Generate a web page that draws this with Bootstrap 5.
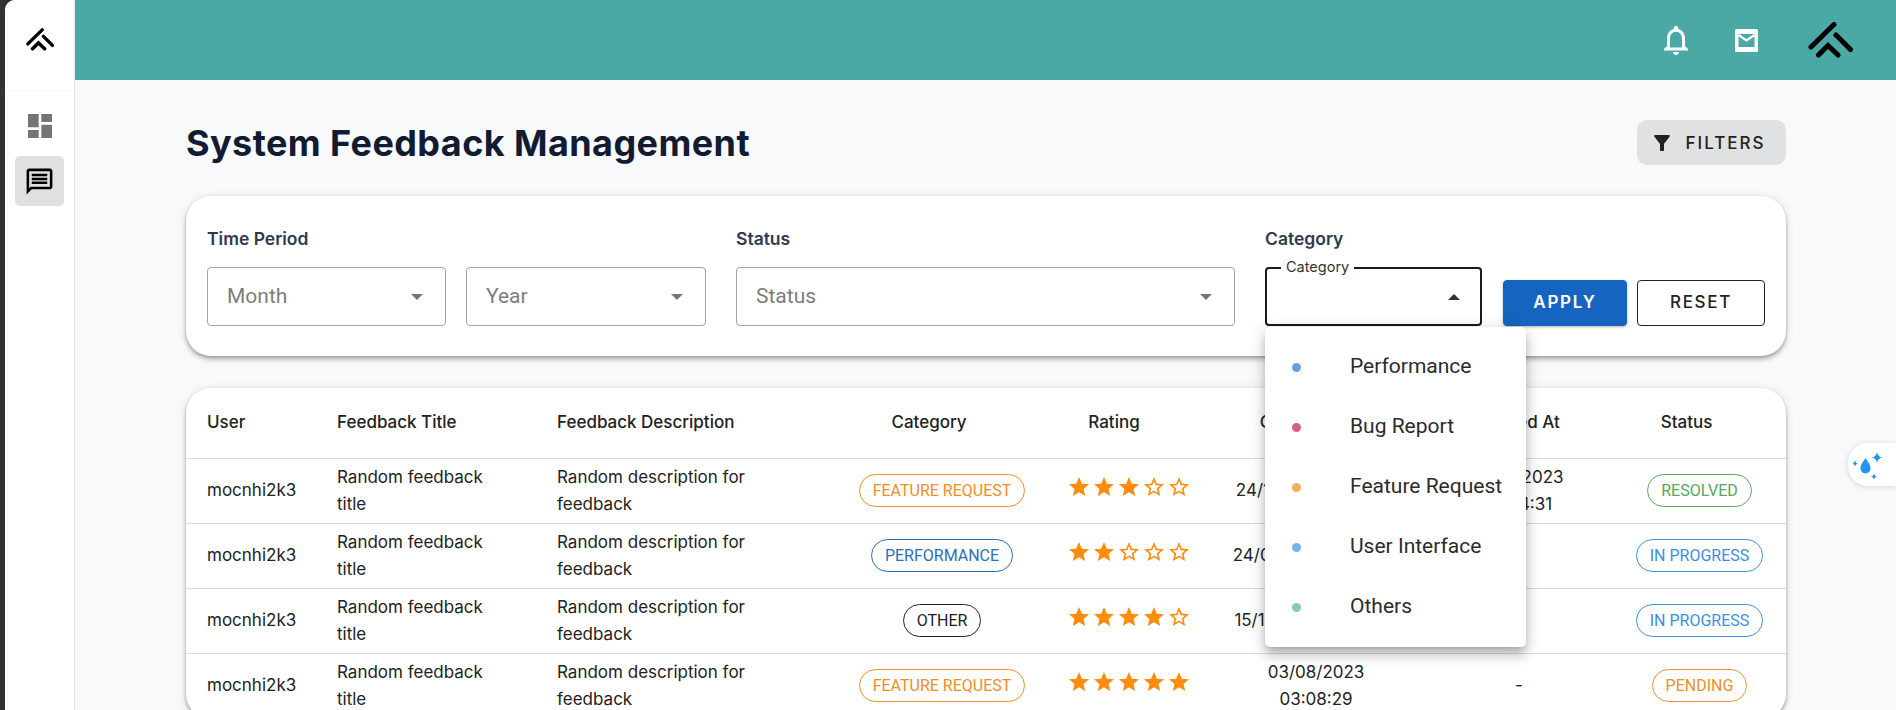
<!DOCTYPE html>
<html lang="en">
<head>
    <meta charset="UTF-8">
    <meta name="viewport" content="width=device-width, initial-scale=1.0">
    <title>System Feedback Management</title>
    <link href="https://cdn.jsdelivr.net/npm/bootstrap@5.3.3/dist/css/bootstrap.min.css" rel="stylesheet">
    <style>
        html, body { height: 710px; overflow: hidden; }
        body { background: #333; padding-left: 5px; font-family: "Inter", "Liberation Sans", sans-serif; color: #212b36; }
        .app-shell { height: 710px; background: #f8f9fb; border-top-left-radius: 10px; overflow: hidden; }
        .side-rail { width: 70px; background: #fff; border-right: 1px solid #e6e7e9; flex: none; }
        .side-logo { height: 91px; border-bottom: 1px solid #f8f8f8; padding-bottom: 12px; }
        .side-tile { width: 49px; height: 50px; border-radius: 5px; }
        .side-tile.active-tile { background: #e0e0e0; margin-top: 5px; }
        .side-nav { padding-top: 10px; }
        .top-bar { height: 80px; background: #4aa8a5; padding-right: 43px; }
        .mail-ico { margin: 0 50px 0 41px; }
        .page-body { padding: 40px 110px 0 111px; }
        .title-row { height: 45px; }
        .page-title { font-size: 36px; font-weight: 700; color: #121b31; margin: 1px 0 -1px; line-height: 45px; letter-spacing: .42px; }
        .filter-toggle { width: 149px; height: 45px; background: #e0e1e2; border: 0; border-radius: 10px; font-family: "Inter", sans-serif; font-size: 17px; font-weight: 500; letter-spacing: 2px; color: #212121; gap: 11px; padding: 2px 7px 0 0; }
        .filter-toggle svg { margin-top: -2px; }
        .panel-box { background: #fff; border: 0; border-radius: 25px; box-shadow: 0 2px 4px -1px rgba(0,0,0,.3), 0 4px 5px rgba(0,0,0,.14), 0 1px 10px rgba(0,0,0,.1); }
        .filter-panel { margin-top: 31px; height: 160px; padding: 31px 21px 30px; }
        .field-label { font-family: "Inter", sans-serif; font-size: 17.5px; font-weight: 600; color: #2f3a4c; line-height: 24px; margin-bottom: 16px; }
        .select-box { height: 59px; border: 1px solid #a3a3a3; border-radius: 4px; padding: 0 22px 0 19px; font-family: "Roboto", sans-serif; font-size: 21px; color: #7d7d7d; background: #fff; }
        .select-caret { width: 0; height: 0; border-left: 6.5px solid transparent; border-right: 6.5px solid transparent; border-top: 6.5px solid #757575; }
        .time-fields { gap: 20px; }
        .month-box { width: 239px; }
        .year-box { width: 240px; }
        .status-group { margin-left: 30px; width: 499px; }
        .category-group { margin-left: 30px; }
        .action-group { margin-left: 21px; gap: 10px; }
        .select-box.open-box { border: 2px solid #1a1a1a; position: relative; width: 217px; padding-right: 20px; }
        .open-box .select-caret { border-top: 0; border-bottom: 6.5px solid #333; }
        .notch-label { position: absolute; top: -10px; left: 14px; background: #fff; padding: 0 5px; font-family: "Inter", sans-serif; font-size: 14.5px; line-height: 16px; color: #333; }
        .act-btn { height: 46px; font-family: "Inter", sans-serif; font-size: 17px; font-weight: 600; letter-spacing: 1.7px; border-radius: 4px; padding: 0; }
        .apply-btn { width: 124px; background: #1565c0; border-color: #1565c0; box-shadow: 0 1px 3px rgba(0,0,0,.3); }
        .reset-btn { width: 128px; background: #fff; border: 1px solid #222; color: #222; font-weight: 500; }
        .category-menu { top: 58px; left: -2px; width: 261px; padding: 10px 0; border: 0; border-radius: 5px; box-shadow: 0 5px 6px -3px rgba(0,0,0,.2), 0 9px 12px 1px rgba(0,0,0,.14), 0 3px 16px 2px rgba(0,0,0,.12); margin: 0; }
        .category-menu .dropdown-item { height: 60px; padding: 0 0 0 27px; font-size: 21px; color: #2b2b2b; gap: 49px; }
        .cat-dot { width: 9px; height: 9px; border-radius: 50%; flex: none; }
        .table-panel { margin-top: 32px; overflow: hidden; border-radius: 25px; }
        .feedback-table { table-layout: fixed; width: 1600px; margin: 0; font-size: 17px; line-height: 27px; color: #222; }
        .feedback-table th { font-weight: 500; height: 70px; vertical-align: middle; border-bottom: 1px solid #d9dadb; padding: 0; }
        .feedback-table td { height: 65px; padding: 5px 0; vertical-align: middle; border-bottom: 1px solid #d9dadb; }
        .feedback-table .pad-left { padding-left: 21px; }
        .feedback-table .title-cell { padding-right: 40px; }
        .feedback-table .desc-cell { padding-right: 60px; }
        .feedback-table th.shift-head { padding-right: 26px; }
        .feedback-table th.shift-small { padding-right: 10px; }
        .one-line { white-space: nowrap; }
        .state-chip { display: inline-block; height: 33px; line-height: 31px; padding: 0 13px; border: 1px solid currentColor; border-radius: 17px; font-family: "Roboto", sans-serif; font-size: 16px; white-space: nowrap; }
        .chip-orange { color: #f08d2b; }
        .chip-blue { color: #2a6fb5; }
        .chip-dark { color: #222; }
        .chip-green { color: #57a85b; }
        .chip-sky { color: #3b8fdb; }
        .star-row { margin-bottom: 7px; gap: 1px; padding-left: 4px; }
        .star-row svg { width: 24px; height: 24px; fill: #ff8c0a; display: block; }
        .assist-tab { position: absolute; top: 443px; right: 0; width: 48px; height: 43px; background: #fff; border-radius: 20px 0 0 20px; box-shadow: 0 1px 6px rgba(0,0,0,.14); padding-left: 5px; }
    </style>
</head>

<body>
    <div class="app-shell d-flex position-relative">
        <aside class="side-rail d-flex flex-column">
            <div class="side-logo d-flex align-items-center justify-content-center">
                <svg width="28" height="23" viewBox="0 0 45 36" fill="none" stroke="#000" stroke-width="5.5" stroke-linecap="round"><path d="M3 25 26 2.500M28 13l14.500 14.500M10.500 33 20 23.500 30 33"/></svg>
            </div>
            <div class="side-nav d-flex flex-column align-items-center">
                <div class="side-tile d-flex align-items-center justify-content-center">
                    <svg width="32" height="32" viewBox="0 0 24 24" fill="#757575"><path d="M3 13h8V3H3v10zm0 8h8v-6H3v6zm10 0h8V11h-8v10zm0-18v6h8V3h-8z"/></svg>
                </div>
                <div class="side-tile active-tile d-flex align-items-center justify-content-center">
                    <svg width="31" height="31" viewBox="0 0 24 24" fill="#000"><path d="M20 2H4c-1.100 0-2 .9-2 2v18l4-4h14c1.100 0 2-.9 2-2V4c0-1.100-.9-2-2-2zm0 14H5.170L4 17.170V4h16v12zM6 12h12v2H6zm0-3h12v2H6zm0-3h12v2H6z"/></svg>
                </div>
            </div>
        </aside>

        <div class="flex-grow-1">
            <header class="top-bar d-flex align-items-center justify-content-end">
                <svg width="36" height="36" viewBox="0 0 24 24" fill="#fff"><path d="M12 22c1.100 0 2-.9 2-2h-4c0 1.100.89 2 2 2zm6-6v-5c0-3.070-1.640-5.640-4.500-6.320V4c0-.83-.67-1.500-1.500-1.500s-1.500.67-1.500 1.500v.68C7.630 5.360 6 7.920 6 11v5l-2 2v1h16v-1l-2-2zm-2 1H8v-6c0-2.480 1.510-4.500 4-4.500s4 2.020 4 4.500v6z"/></svg>
                <svg class="mail-ico" width="23" height="23" viewBox="0 0 23 23"><rect width="23" height="23" rx="1.500" fill="#fff"/><rect x="3.500" y="5" width="16" height="13" fill="#4aa8a5"/><path d="M3.500 6 11.500 11.500 19.500 6" fill="none" stroke="#fff" stroke-width="2.200"/></svg>
                <svg width="45" height="36" viewBox="0 0 45 36" fill="none" stroke="#000" stroke-width="5" stroke-linecap="round"><path d="M3 25 26 2.500M28 13l14.500 14.500M10.500 33 20 23.500 30 33"/></svg>
            </header>

            <main class="page-body">
                <div class="title-row d-flex justify-content-between align-items-center">
                    <h1 class="page-title">System Feedback Management</h1>
                    <button class="filter-toggle d-flex align-items-center justify-content-center" type="button">
                        <svg width="24" height="24" viewBox="0 0 24 24" fill="#212121"><path d="M4.250 5.610C6.270 8.200 10 13 10 13v6c0 .55.45 1 1 1h2c.55 0 1-.45 1-1v-6s3.720-4.800 5.740-7.390C20.250 4.950 19.780 4 18.950 4H5.040c-.83 0-1.300.95-.79 1.610z"/></svg>
                        FILTERS
                    </button>
                </div>

                <section class="panel-box filter-panel d-flex">
                    <div>
                        <div class="field-label">Time Period</div>
                        <div class="d-flex time-fields">
                            <div class="select-box month-box d-flex align-items-center justify-content-between">Month<span class="select-caret"></span></div>
                            <div class="select-box year-box d-flex align-items-center justify-content-between">Year<span class="select-caret"></span></div>
                        </div>
                    </div>
                    <div class="status-group">
                        <div class="field-label">Status</div>
                        <div class="select-box d-flex align-items-center justify-content-between">Status<span class="select-caret"></span></div>
                    </div>
                    <div class="category-group">
                        <div class="field-label">Category</div>
                        <div class="select-box open-box d-flex align-items-center justify-content-end">
                            <span class="notch-label">Category</span>
                            <span class="select-caret"></span>
                            <div class="dropdown-menu show position-absolute category-menu">
                                <a class="dropdown-item d-flex align-items-center" href="#"><span class="cat-dot" style="background:#6b9fd8"></span>Performance</a>
                                <a class="dropdown-item d-flex align-items-center" href="#"><span class="cat-dot" style="background:#d1647c"></span>Bug Report</a>
                                <a class="dropdown-item d-flex align-items-center" href="#"><span class="cat-dot" style="background:#f5ad5b"></span>Feature Request</a>
                                <a class="dropdown-item d-flex align-items-center" href="#"><span class="cat-dot" style="background:#71b4ee"></span>User Interface</a>
                                <a class="dropdown-item d-flex align-items-center" href="#"><span class="cat-dot" style="background:#88c8bf"></span>Others</a>
                            </div>
                        </div>
                    </div>
                    <div class="d-flex align-items-end action-group">
                        <button class="btn btn-primary act-btn apply-btn" type="button">APPLY</button>
                        <button class="btn act-btn reset-btn" type="button">RESET</button>
                    </div>
                </section>

                <section class="panel-box table-panel">
                    <table class="table feedback-table">
                        <colgroup id="feedback-cols"></colgroup>
                        <thead>
                            <tr>
                                <th class="pad-left">User</th>
                                <th class="pad-left">Feedback Title</th>
                                <th class="pad-left">Feedback Description</th>
                                <th class="text-center shift-head">Category</th>
                                <th class="text-center shift-head">Rating</th>
                                <th class="text-center shift-head">Created At</th>
                                <th class="text-center shift-small">Updated At</th>
                                <th class="text-center shift-head">Status</th>
                            </tr>
                        </thead>
                        <tbody id="feedback-rows"></tbody>
                    </table>
                </section>
            </main>
        </div>

        <div class="assist-tab d-flex align-items-center">
            <svg width="32" height="32" viewBox="0 0 32 32" fill="#2196f3"><path d="M12.500 9c2 3.500 5 6 5 10.500a5 5 0 0 1-10 0c0-4.500 3-7 5-10.500z"/><path d="M24 3q.7 4.800 5.500 5.500Q24.700 9.200 24 14q-.7-4.800-5.500-5.500Q23.300 7.800 24 3zM2 11.500q.5 2.500 3 3-2.500.5-3 3-.5-2.500-3-3 2.500-.5 3-3zM21 24.500q.5 2.500 3 3-2.500.5-3 3-.5-2.500-3-3 2.500-.5 3-3z"/></svg>
        </div>
    </div>

    <script src="https://cdn.jsdelivr.net/npm/bootstrap@5.3.3/dist/js/bootstrap.bundle.min.js"></script>
    <script>
        const colWidths = [130, 220, 301, 210, 160, 218, 188, 173];
        document.getElementById("feedback-cols").innerHTML = colWidths.map(w => `<col style="width:${w}px">`).join("");

        const starFull = '<svg viewBox="0 0 24 24"><path d="M12 17.270 18.180 21l-1.640-7.030L22 9.240l-7.190-.61L12 2 9.190 8.630 2 9.240l5.460 4.730L5.820 21z"/></svg>';
        const starEmpty = '<svg viewBox="0 0 24 24"><path d="M22 9.240l-7.190-.62L12 2 9.190 8.630 2 9.240l5.460 4.730L5.820 21 12 17.270 18.180 21l-1.630-7.030L22 9.240zM12 15.400l-3.760 2.270 1-4.280-3.320-2.880 4.380-.38L12 6.100l1.710 4.040 4.380.38-3.320 2.880 1 4.280L12 15.400z"/></svg>';

        const rows = [
            { cat: "FEATURE REQUEST", catClass: "chip-orange", rating: 3, created: '<span class="one-line">24/11/2023 09:14:31</span>', updated: "24/11/2023<br>09:14:31", status: "RESOLVED", statusClass: "chip-green" },
            { cat: "PERFORMANCE", catClass: "chip-blue", rating: 2, created: '<span class="one-line">24/08/2023 10:21:47</span>', updated: "-", status: "IN PROGRESS", statusClass: "chip-sky" },
            { cat: "OTHER", catClass: "chip-dark", rating: 4, created: '<span class="one-line">15/10/2023 08:32:16</span>', updated: "-", status: "IN PROGRESS", statusClass: "chip-sky" },
            { cat: "FEATURE REQUEST", catClass: "chip-orange", rating: 5, created: "03/08/2023<br>03:08:29", updated: "-", status: "PENDING", statusClass: "chip-orange" }
        ];

        document.getElementById("feedback-rows").innerHTML = rows.map(r => {
            const stars = [1, 2, 3, 4, 5].map(n => n <= r.rating ? starFull : starEmpty).join("");
            return `<tr>
                <td class="pad-left">mocnhi2k3</td>
                <td class="pad-left title-cell">Random feedback title</td>
                <td class="pad-left desc-cell">Random description for feedback</td>
                <td class="text-center"><span class="state-chip ${r.catClass}">${r.cat}</span></td>
                <td><div class="star-row d-flex justify-content-center">${stars}</div></td>
                <td class="text-center">${r.created}</td>
                <td class="text-center">${r.updated}</td>
                <td class="text-center"><span class="state-chip ${r.statusClass}">${r.status}</span></td>
            </tr>`;
        }).join("");
    </script>
</body>
</html>
